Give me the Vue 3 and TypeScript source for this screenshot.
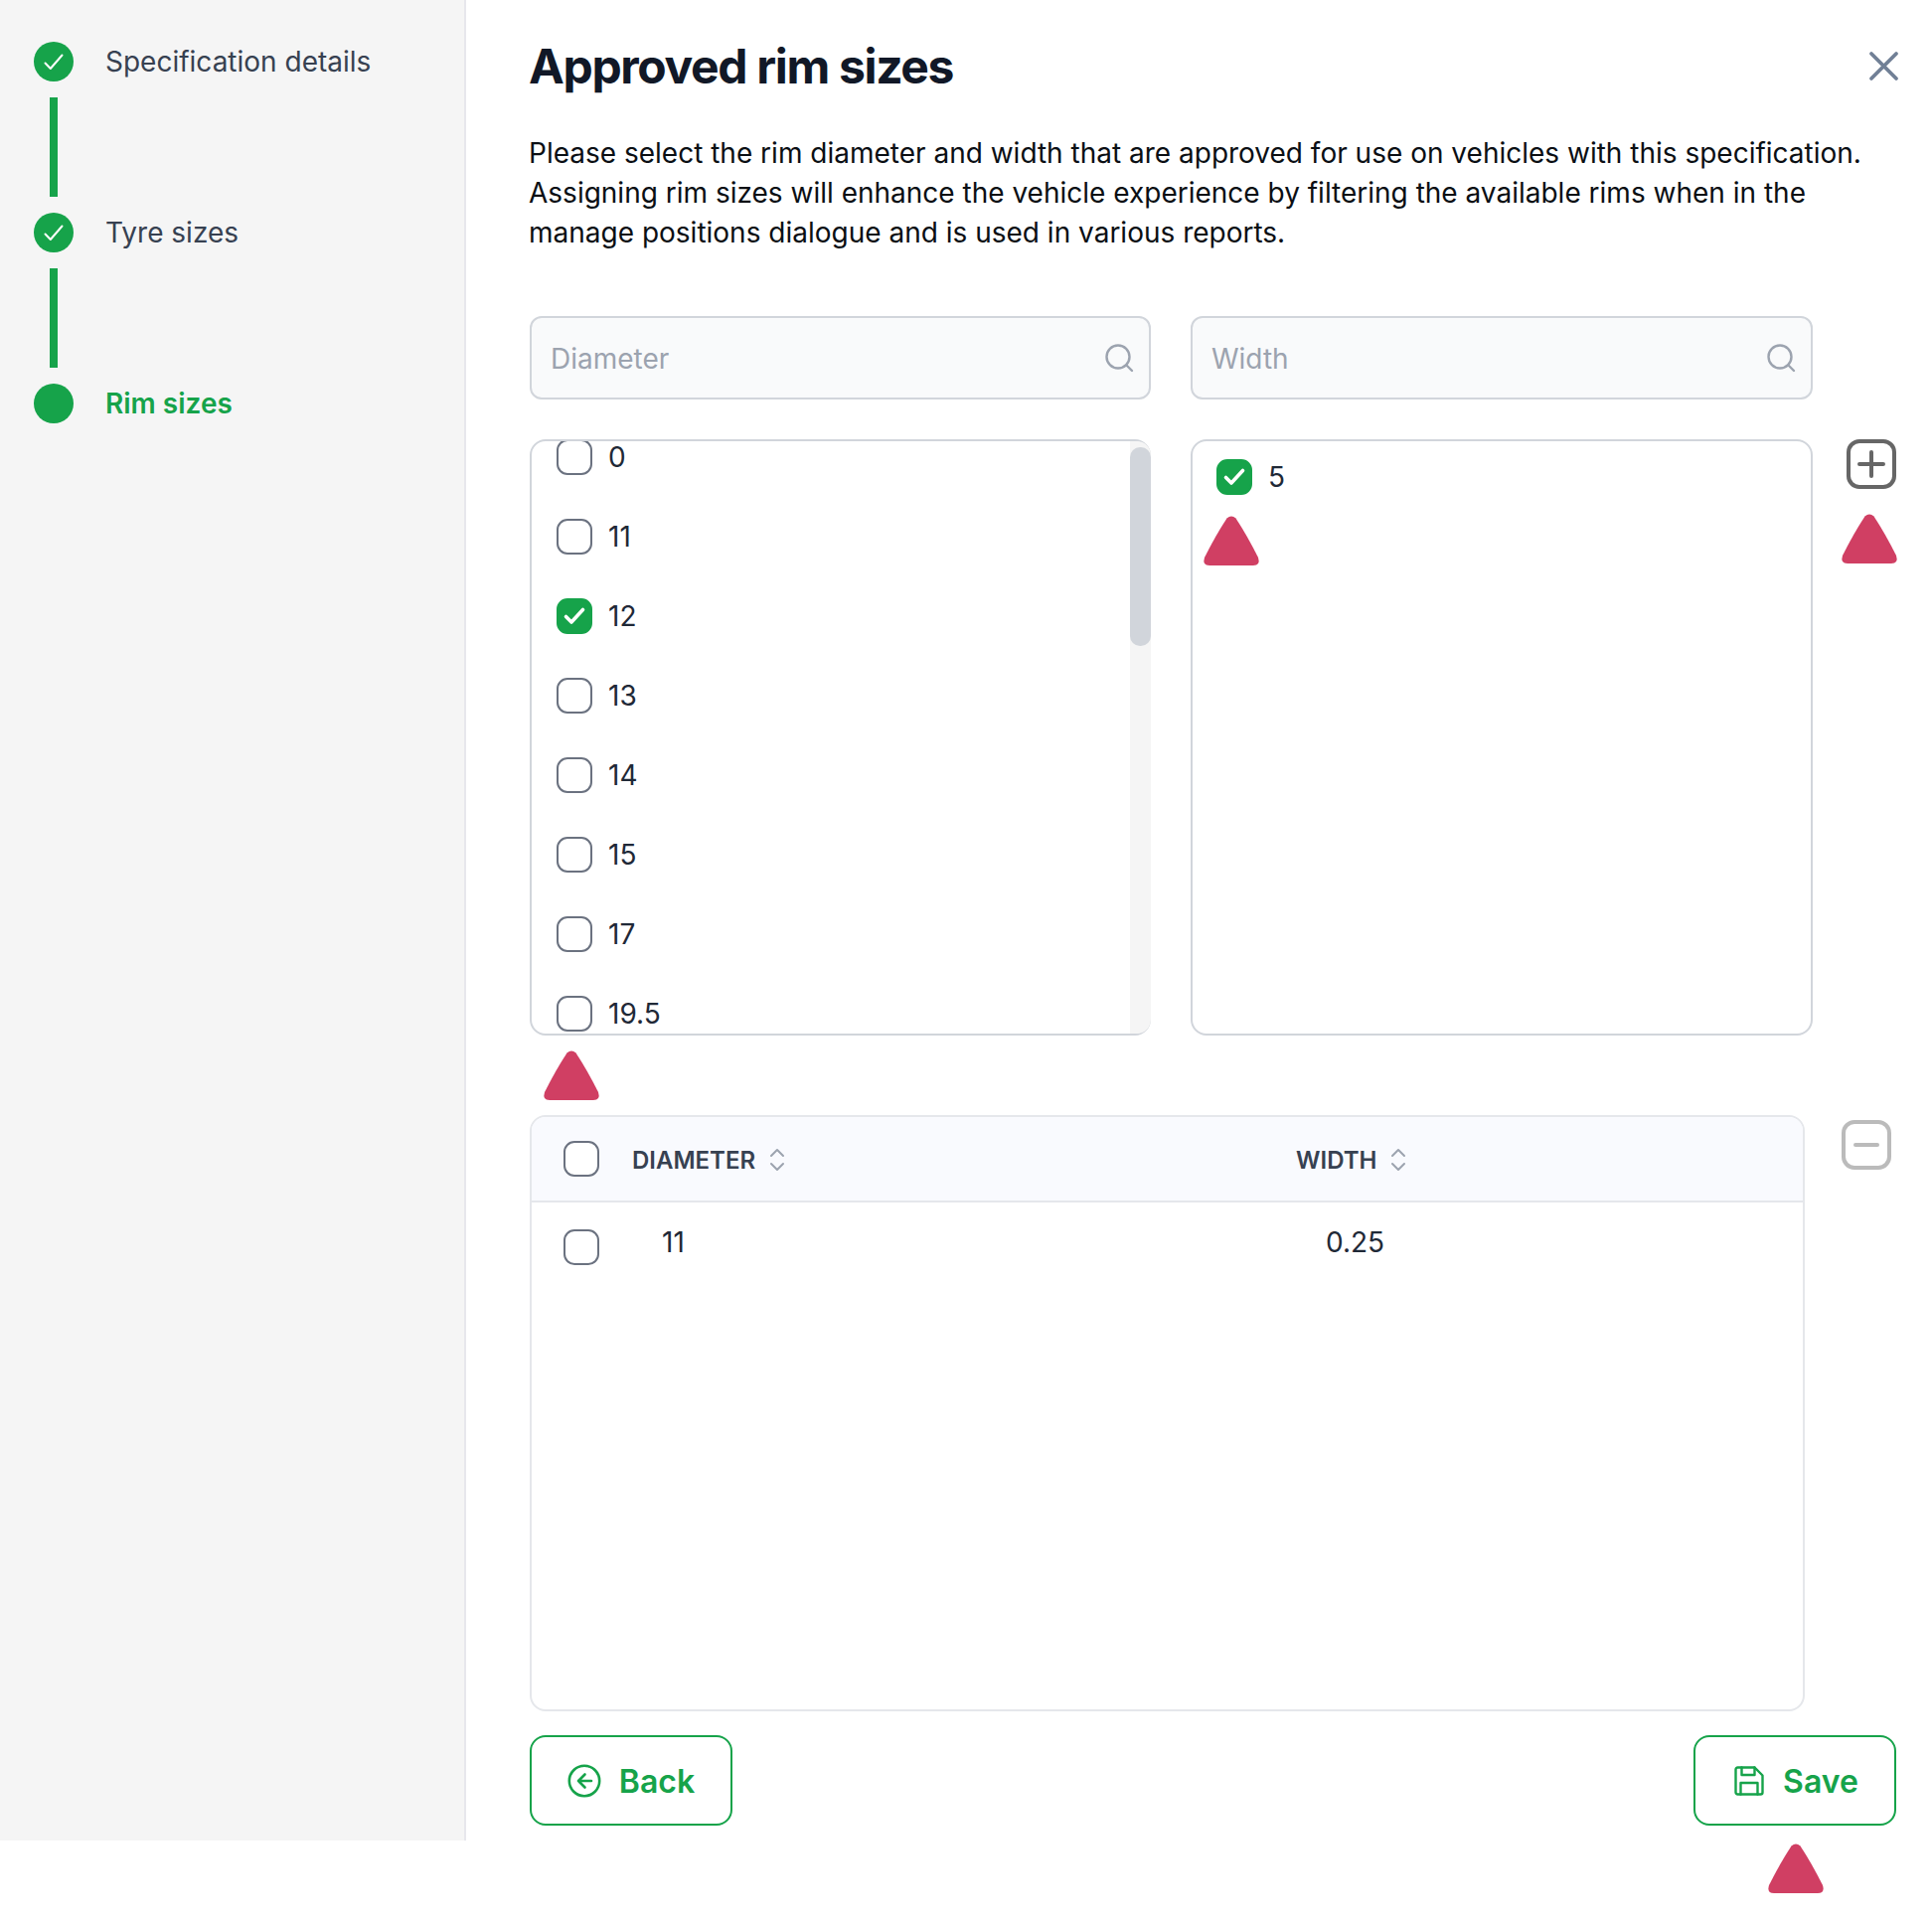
<script setup lang="ts">
const steps = [
  { label: 'Specification details', done: true },
  { label: 'Tyre sizes', done: true },
  { label: 'Rim sizes', done: false },
]
const diameters = [
  { v: '0', c: false }, { v: '11', c: false }, { v: '12', c: true }, { v: '13', c: false },
  { v: '14', c: false }, { v: '15', c: false }, { v: '17', c: false }, { v: '19.5', c: false },
]
</script>

<template>
  <div class="page">
    <aside class="side">
      <template v-for="(s, i) in steps" :key="s.label">
        <div class="step" :class="{ active: !s.done }">
          <span class="dot">
            <svg v-if="s.done" viewBox="0 0 40 40" width="40" height="40" fill="none" stroke="#fff" stroke-width="2" stroke-linecap="round" stroke-linejoin="round"><path d="M11.500 21.500L16.800 27L28.500 13.500" /></svg>
          </span>
          <span class="step-label">{{ s.label }}</span>
        </div>
        <div v-if="i < steps.length - 1" class="bar"></div>
      </template>
    </aside>

    <main class="main">
      <header class="head">
        <h1>Approved rim sizes</h1>
        <svg class="close" viewBox="0 0 32 32" width="32" height="32" fill="none" stroke="#718096" stroke-width="3.800" stroke-linecap="round"><path d="M3 3l25 25M28 3L3 28" /></svg>
      </header>
      <p class="intro">Please select the rim diameter and width that are approved for use on vehicles with this specification.<br />Assigning rim sizes will enhance the vehicle experience by filtering the available rims when in the<br />manage positions dialogue and is used in various reports.</p>

      <div class="pickers">
        <div class="search">
          <span>Diameter</span>
          <svg viewBox="0 0 30 30" width="30" height="30" fill="none" stroke="#9ca3af" stroke-width="2.400" stroke-linecap="round"><circle cx="14" cy="14" r="11.500" /><path d="M22.500 22.500l5.500 5.500" /></svg>
        </div>
        <div class="search">
          <span>Width</span>
          <svg viewBox="0 0 30 30" width="30" height="30" fill="none" stroke="#9ca3af" stroke-width="2.400" stroke-linecap="round"><circle cx="14" cy="14" r="11.500" /><path d="M22.500 22.500l5.500 5.500" /></svg>
        </div>
        <div class="gutter"></div>

        <div class="list dia">
          <div class="rows">
            <label v-for="d in diameters" :key="d.v" class="row">
              <span class="box" :class="{ on: d.c }">
                <svg v-if="d.c" viewBox="0 0 36 36" width="36" height="36" fill="none" stroke="#fff" stroke-width="3.600" stroke-linecap="round" stroke-linejoin="round"><path d="M9.500 18.500l5.500 5.500L26.500 11.500" /></svg>
              </span>
              <span>{{ d.v }}</span>
            </label>
          </div>
          <div class="track"><div class="thumb"></div></div>
          <span class="tri tri-dia"></span>
        </div>
        <div class="list wid">
          <label class="row one">
            <span class="box on">
              <svg viewBox="0 0 36 36" width="36" height="36" fill="none" stroke="#fff" stroke-width="3.600" stroke-linecap="round" stroke-linejoin="round"><path d="M9.500 18.500l5.500 5.500L26.500 11.500" /></svg>
            </span>
            <span>5</span>
          </label>
          <span class="tri tri-wid"></span>
        </div>
        <div class="gutter add">
          <svg viewBox="0 0 50 50" width="50" height="50" fill="none" stroke="#666" stroke-width="4" stroke-linecap="round"><rect x="2" y="2" width="46" height="46" rx="11" /><path d="M25 13v24M13 25h24" /></svg>
          <span class="tri tri-add"></span>
        </div>
      </div>

      <div class="table-row">
        <div class="table">
          <div class="thead">
            <span class="box tbox"></span>
            <span class="th th-d">DIAMETER
              <svg viewBox="0 0 16 24" width="16" height="24" fill="none" stroke="#9ca3af" stroke-width="2" stroke-linecap="round" stroke-linejoin="round"><path d="M2 8l6-6 6 6M2 16l6 6 6-6" /></svg>
            </span>
            <span class="th th-w">WIDTH
              <svg viewBox="0 0 16 24" width="16" height="24" fill="none" stroke="#9ca3af" stroke-width="2" stroke-linecap="round" stroke-linejoin="round"><path d="M2 8l6-6 6 6M2 16l6 6 6-6" /></svg>
            </span>
          </div>
          <div class="tbody-row">
            <span class="box tbox"></span>
            <span class="td-d">11</span>
            <span class="td-w">0.25</span>
          </div>
        </div>
        <svg class="minus" viewBox="0 0 50 50" width="50" height="50" fill="none" stroke="#bbb" stroke-width="4" stroke-linecap="round"><rect x="2" y="2" width="46" height="46" rx="11" /><path d="M14 25h22" /></svg>
      </div>

      <footer class="foot">
        <button class="btn" type="button">
          <svg viewBox="0 0 34 34" width="34" height="34" fill="none" stroke="#16a34a" stroke-width="2.600" stroke-linecap="round" stroke-linejoin="round"><circle cx="17" cy="17" r="15.200" /><path d="M17.500 10.500L11 17l6.500 6.500M11 17h13" /></svg>
          Back
        </button>
        <div class="save-wrap">
          <button class="btn save" type="button">
            <svg viewBox="0 0 30 30" width="30" height="30" fill="none" stroke="#16a34a" stroke-width="2.400" stroke-linecap="round" stroke-linejoin="round"><path d="M3.500 1.500h17l8 8v17a2 2 0 0 1-2 2h-23a2 2 0 0 1-2-2v-23a2 2 0 0 1 2-2z" /><path d="M7.500 1.500v7.500h13V1.500M6.500 28.500V17h17v11.500" /></svg>
            Save
          </button>
          <span class="tri tri-save"></span>
        </div>
      </footer>
    </main>
  </div>
</template>

<style scoped>
.page {
  display: flex;
  align-items: flex-start;
  width: 1944px;
  min-height: 1936px;
  font-family: Inter, "Liberation Sans", sans-serif;
  color: #111827;
  background: #fff;
}
.side {
  box-sizing: border-box;
  width: 469px;
  height: 1852px;
  flex: none;
  padding: 42px 0 0 34px;
  background: #f5f5f5;
  border-right: 2px solid #e7e7ec;
}
.step {
  display: flex;
  align-items: center;
  height: 40px;
  gap: 32px;
  font-size: 28px;
  color: #374151;
}
.step.active {
  color: #16a34a;
  font-weight: 600;
}
.dot {
  display: flex;
  align-items: center;
  justify-content: center;
  width: 40px;
  height: 40px;
  border-radius: 50%;
  background: #16a34a;
}
.bar {
  width: 8px;
  height: 100px;
  margin: 16px 0 16px 16px;
  background: #16a34a;
}
.main {
  position: relative;
  flex: none;
  box-sizing: border-box;
  width: 1475px;
  padding: 0 36px 0 64px;
}
.head {
  display: flex;
  justify-content: space-between;
  align-items: center;
  height: 134px;
}
h1 {
  margin: 0 0 0 -1px;
  font-size: 48px;
  line-height: 134px;
  font-weight: 700;
  letter-spacing: -1.350px;
  color: #111827;
}
.close {
  margin-right: -4px;
}
.intro {
  margin: 0 0 0 -1px;
  font-size: 28px;
  line-height: 40px;
  color: #0b0f14;
  white-space: nowrap;
}
.pickers {
  display: grid;
  grid-template-columns: 625px 626px 84px;
  grid-template-rows: 84px 600px;
  column-gap: 40px;
  row-gap: 40px;
  margin-top: 64px;
  width: 1375px;
}
.gutter {
  margin-left: -6px;
}
.search {
  box-sizing: border-box;
  display: flex;
  align-items: center;
  justify-content: space-between;
  padding: 2px 15px 0 19px;
  background: #f9fafb;
  border: 2px solid #d1d5db;
  border-radius: 12px;
  font-size: 28px;
  color: #9ca3af;
}
.search svg {
  margin-top: -2px;
}
.list {
  box-sizing: border-box;
  position: relative;
  border: 2px solid #d1d5db;
  border-radius: 16px;
  background: #fff;
}
.dia {
  display: flex;
}
.rows {
  flex: 1;
  height: 596px;
  overflow: hidden;
  padding-left: 25px;
  border-radius: 14px;
}
.row {
  display: flex;
  align-items: center;
  gap: 16px;
  height: 80px;
  font-size: 28px;
  color: #1f2937;
}
.rows .row:first-child {
  margin-top: -24px;
}
.row.one {
  height: 36px;
  margin: 18px 0 0 24px;
  gap: 16px;
}
.box {
  box-sizing: border-box;
  display: inline-flex;
  align-items: center;
  justify-content: center;
  flex: none;
  width: 36px;
  height: 36px;
  border: 2px solid #6b7280;
  border-radius: 11px;
  background: #fff;
}
.box.on {
  background: #16a34a;
  border-color: #16a34a;
}
.box svg {
  flex: none;
  margin: -2px;
}
.track {
  width: 21px;
  height: 596px;
  margin-right: -2px;
  background: #f5f5f5;
  border-radius: 0 14px 14px 0;
  overflow: hidden;
  flex: none;
}
.thumb {
  width: 21px;
  height: 200px;
  margin-top: 6px;
  border-radius: 10px;
  background: #d1d5db;
}
.tri {
  position: absolute;
  width: 56px;
  height: 50px;
}
.tri::before {
  content: "";
  position: absolute;
  inset: 0;
  background: #d03f63;
  clip-path: path("M23.500 2.500 Q28 -1.500 32.500 2.500 Q44 20 55 42 Q57.500 50 50 50 L6 50 Q-1.500 50 1 42 Q12 20 23.500 2.500 Z");
}
.tri-dia {
  left: 12px;
  top: 613px;
}
.tri-wid {
  left: 11px;
  top: 75px;
}
.add {
  position: relative;
}
.add svg {
  display: block;
}
.tri-add {
  left: -5px;
  top: 75px;
}
.table-row {
  position: relative;
  display: flex;
  margin-top: 80px;
}
.table {
  box-sizing: border-box;
  width: 1283px;
  height: 600px;
  border: 2px solid #e5e7eb;
  border-radius: 16px;
  overflow: hidden;
}
.thead {
  display: flex;
  align-items: center;
  height: 84px;
  padding-left: 32px;
  background: #f9fafe;
  border-bottom: 2px solid #e5e7eb;
}
.th {
  display: flex;
  align-items: center;
  gap: 14px;
  padding-top: 2px;
  font-size: 24px;
  font-weight: 600;
  color: #374151;
}
.th-d {
  margin-left: 33px;
  width: 668px;
}
.tbody-row {
  display: flex;
  align-items: flex-start;
  padding: 27px 0 0 32px;
  font-size: 28px;
  color: #1f2937;
}
.td-d {
  margin: -4px 0 0 63px;
  width: 668px;
}
.td-w {
  margin-top: -4px;
}
.minus {
  position: absolute;
  left: 1320px;
  top: 5px;
}
.foot {
  display: flex;
  justify-content: space-between;
  margin-top: 24px;
}
.btn {
  box-sizing: border-box;
  display: inline-flex;
  align-items: center;
  justify-content: center;
  gap: 18px;
  width: 204px;
  height: 91px;
  padding: 1px 0 0;
  background: #fff;
  border: 2px solid #16a34a;
  border-radius: 16px;
  font: 600 32px Inter, "Liberation Sans", sans-serif;
  color: #16a34a;
}
.save {
  gap: 19px;
  padding-left: 3px;
}
.save-wrap {
  position: relative;
}
.tri-save {
  left: 75px;
  top: 109px;
}
</style>

<style>
html, body {
  margin: 0;
  background: #fff;
}
</style>
